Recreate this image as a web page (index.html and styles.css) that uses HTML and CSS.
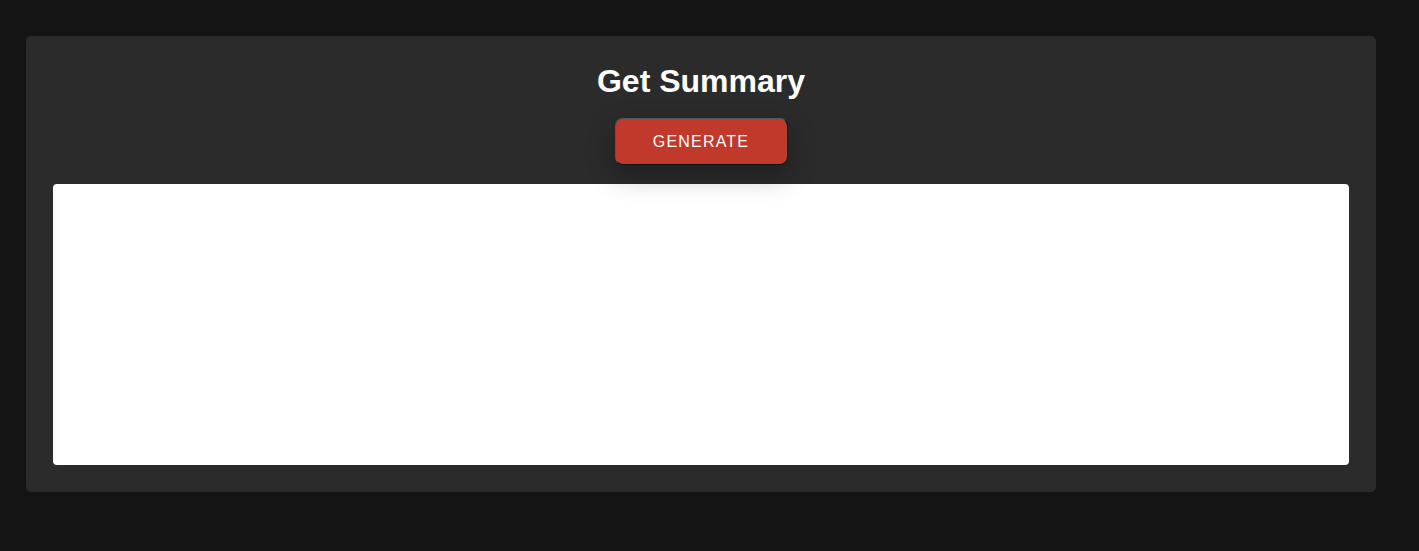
FILE: index.html
```html
<!DOCTYPE html>
<html>
<head>
<meta charset="utf-8">
<link rel="stylesheet" href="styles.css">
</head>
<body>
<div class="card">
  <h1 class="title">Get Summary</h1>
  <div class="actions">
    <button class="btn">GENERATE</button>
  </div>
  <div class="output"></div>
</div>
</body>
</html>
```
FILE: styles.css
```css
html, body {
  margin: 0;
  background: #141414;
}
body {
  padding: 36px 43px 0 26px;
  font-family: "Liberation Sans", Arial, sans-serif;
}
.card {
  background: #2b2b2b;
  border-radius: 5px;
  padding: 27px 27px 27px;
}
.title {
  margin: 0;
  color: #fff;
  font-size: 32px;
  line-height: 37px;
  font-weight: bold;
  text-align: center;
}
.actions {
  display: flex;
  justify-content: center;
  margin-top: 18px;
  position: relative;
  z-index: 1;
}
.btn {
  width: 173px;
  height: 47px;
  background: #c0392b;
  color: #fff;
  font-family: "Liberation Sans", Arial, sans-serif;
  font-size: 16px;
  letter-spacing: 1.2px;
  border: 1px solid #111;
  border-top-color: #555;
  border-left-color: #555;
  border-radius: 8px;
  box-shadow: 0 10px 28px rgba(0, 0, 0, 0.3);
}
.output {
  margin-top: 19px;
  height: 281px;
  background: #fff;
  border-radius: 4px;
}
```
